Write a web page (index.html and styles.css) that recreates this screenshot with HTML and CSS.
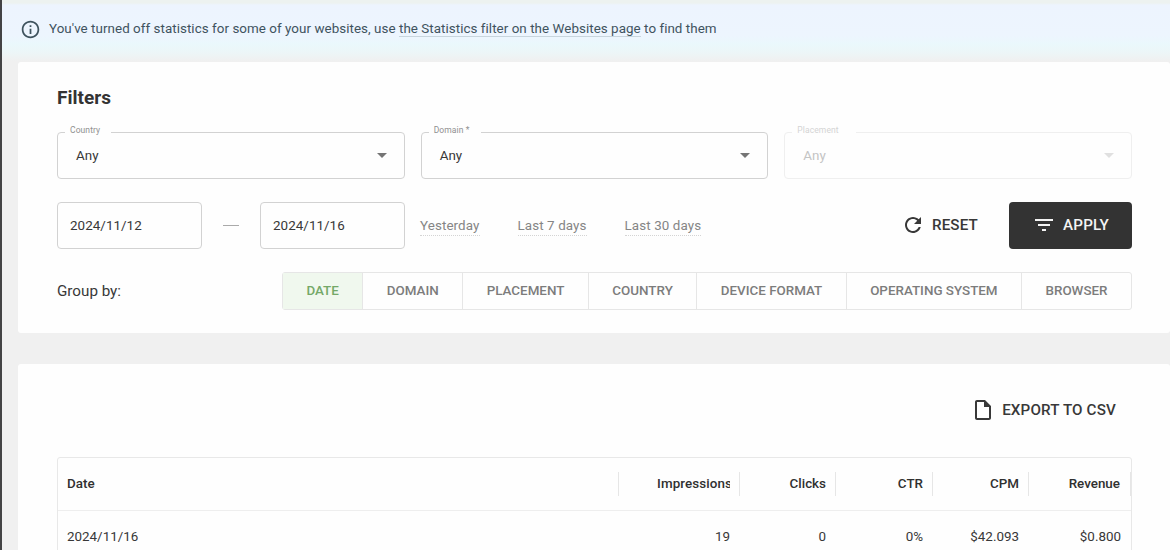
FILE: index.html
```
<!DOCTYPE html>
<html lang="en">
<head>
  <meta charset="UTF-8" />
  <title>Statistics</title>
  <link rel="stylesheet" href="styles.css">
</head>
<body>
  <div class="page">
    <!-- Notice -->
    <div class="notice">
      <svg class="notice-icon" viewBox="0 0 24 24"><path d="M11 7h2v2h-2zm0 4h2v6h-2zm1-9C6.48 2 2 6.48 2 12s4.48 10 10 10 10-4.48 10-10S17.52 2 12 2zm0 18c-4.41 0-8-3.59-8-8s3.59-8 8-8 8 3.59 8 8-3.59 8-8 8z"/></svg>
      <p class="notice-text">You've turned off statistics for some of your websites, use <a class="notice-link">the Statistics filter on the Websites page</a> to find them</p>
    </div>

    <!-- Filters -->
    <section class="card filters">
      <h2 class="title">Filters</h2>

      <div class="selects">
        <div class="select">
          <span class="label country">Country</span>
          <span>Any</span>
          <svg class="arrow" viewBox="0 0 10 5"><path d="M0 0h10L5 5z"/></svg>
        </div>
        <div class="select">
          <span class="label domain">Domain *</span>
          <span>Any</span>
          <svg class="arrow" viewBox="0 0 10 5"><path d="M0 0h10L5 5z"/></svg>
        </div>
        <div class="select disabled">
          <span class="label placement">Placement</span>
          <span>Any</span>
          <svg class="arrow" viewBox="0 0 10 5"><path d="M0 0h10L5 5z"/></svg>
        </div>
      </div>

      <div class="dates">
        <div class="date">2024/11/12</div>
        <span class="dash"></span>
        <div class="date">2024/11/16</div>
        <div class="presets">
          <a class="preset">Yesterday</a>
          <a class="preset">Last 7 days</a>
          <a class="preset">Last 30 days</a>
        </div>
        <div class="button reset">
          <svg class="reset-icon" viewBox="4 4 16 16"><path d="M17.65 6.35C16.2 4.9 14.21 4 12 4c-4.42 0-7.99 3.58-7.99 8s3.57 8 7.99 8c3.73 0 6.84-2.55 7.73-6h-2.08c-.82 2.33-3.04 4-5.65 4-3.31 0-6-2.69-6-6s2.69-6 6-6c1.66 0 3.14.69 4.22 1.78L13 11h7V4l-2.35 2.35z"/></svg>
          <span>RESET</span>
        </div>
        <div class="button apply">
          <svg class="apply-icon" viewBox="3 6 18 12"><path d="M10 18h4v-2h-4v2zM3 6v2h18V6H3zm3 7h12v-2H6v2z"/></svg>
          <span>APPLY</span>
        </div>
      </div>

      <div class="group">
        <span class="group-label">Group by:</span>
        <div class="tabs">
          <div class="tab active">DATE</div>
          <div class="tab">DOMAIN</div>
          <div class="tab">PLACEMENT</div>
          <div class="tab">COUNTRY</div>
          <div class="tab">DEVICE FORMAT</div>
          <div class="tab">OPERATING SYSTEM</div>
          <div class="tab">BROWSER</div>
        </div>
      </div>
    </section>

    <!-- Results -->
    <section class="card results">
      <div class="button export">
        <svg class="export-icon" viewBox="4 2 16 20"><path d="M14 2H6c-1.100 0-2 .9-2 2v16c0 1.100.9 2 2 2h12c1.100 0 2-.9 2-2V8l-6-6zM6 20V4h7v5h5v11H6z"/></svg>
        <span>EXPORT TO CSV</span>
      </div>

      <div class="table">
        <div class="row head">
          <div class="cell">Date</div>
          <div class="cell"><span class="clip">Impressions</span></div>
          <div class="cell">Clicks</div>
          <div class="cell">CTR</div>
          <div class="cell">CPM</div>
          <div class="cell">Revenue</div>
        </div>
        <div class="row">
          <div class="cell">2024/11/16</div>
          <div class="cell">19</div>
          <div class="cell">0</div>
          <div class="cell">0%</div>
          <div class="cell">$42.093</div>
          <div class="cell">$0.800</div>
        </div>
      </div>
    </section>
  </div>
</body>
</html>
```
FILE: styles.css
```
* {
  box-sizing: border-box;
}

body {
  margin: 0;
  height: 550px;
  overflow: hidden;
  background: #f0f0f0;
  color: #383838;
  font-family: Roboto, sans-serif;
  font-size: 13.4px;
}

.page {
  height: 550px;
  border-left: 2px solid #434345;
  overflow: hidden;
}

svg {
  fill: currentColor;
  flex: none;
}

/* blue notice on top */
.notice {
  display: flex;
  align-items: center;
  height: 62px;
  padding: 0 0 5px 20px;
  color: #3f535e;
  background: linear-gradient(#edf2f0 0, #edf2f0 3px, #edf4fe 5px, #edf5fe 36px, #eaf8fc 44px, #ecf6f8 52px, #f0f0f0 61px);
}

.notice-icon {
  width: 21px;
  height: 21px;
  margin: 1px 6px 0 -2px;
}

.notice-text {
  margin: 0;
  padding-left: 2px;
  line-height: 18px;
  letter-spacing: 0.045px;
  white-space: nowrap;
}

.notice-link {
  border-bottom: 1px solid #c8d5dd;
}

.card {
  margin-left: 16px;
  padding: 0 38px 0 39px;
  background: #fefefe;
  border-radius: 3px;
}

.filters {
  height: 271px;
  padding-top: 25px;
}

.title {
  margin: 0 0 24px;
  color: #333;
  font-size: 19px;
  font-weight: 700;
  line-height: 21px;
}

.selects {
  display: grid;
  grid-template-columns: repeat(3, 1fr);
  gap: 16px;
}

.select {
  position: relative;
  display: flex;
  align-items: center;
  justify-content: space-between;
  height: 47px;
  padding: 0 17px 0 18px;
  border: 1px solid #d2d2d2;
  border-radius: 4px;
}

/* label sits on the field border */
.label {
  position: absolute;
  top: -8px;
  left: 7px;
  padding-left: 5px;
  background: #fefefe;
  color: #909090;
  font-size: 8.5px;
  line-height: 10px;
  letter-spacing: 0.1px;
}

.label.country { width: 46px; }
.label.domain { width: 52px; }
.label.placement { width: 64px; }

.arrow {
  width: 10px;
  height: 5px;
  color: #757575;
}

.select.disabled {
  border-color: #efefef;
  color: #c4c4c4;
}

.select.disabled .label {
  color: #d4d4d4;
}

.select.disabled .arrow {
  color: #e0e0e0;
}

.dates {
  display: flex;
  align-items: center;
  margin-top: 23px;
}

.date {
  width: 145px;
  height: 47px;
  padding-left: 12px;
  border: 1px solid #d2d2d2;
  border-radius: 4px;
  line-height: 45px;
  letter-spacing: 0.05px;
}

.dash {
  width: 16px;
  height: 1px;
  margin: 0 21px 1px;
  background: #aaa;
}

.presets {
  display: flex;
  gap: 38px;
  margin-left: 15px;
}

.preset {
  border-bottom: 1px dotted #d4d4d4;
  color: #858585;
  line-height: 19px;
  letter-spacing: 0.1px;
}

.button {
  display: flex;
  align-items: center;
  font-size: 15.2px;
  font-weight: 500;
  letter-spacing: 0.15px;
}

.reset {
  gap: 11px;
  margin-left: auto;
  padding-bottom: 2px;
}

.reset-icon {
  width: 16px;
  height: 16px;
}

.apply {
  justify-content: center;
  gap: 10px;
  width: 123px;
  height: 47px;
  margin-left: 31px;
  padding: 0 0 2px 3px;
  border-radius: 4px;
  background: #333;
  color: #f4f4f4;
}

.apply-icon {
  width: 18px;
  height: 12px;
}

.group {
  display: flex;
  align-items: center;
  justify-content: space-between;
  margin-top: 23px;
}

.group-label {
  font-size: 15.2px;
}

.tabs {
  display: flex;
  width: 850px;
  height: 38px;
  border: 1px solid #e6e6e6;
  border-radius: 3px;
}

.tab {
  flex: auto;
  border-left: 1px solid #e6e6e6;
  color: #7c7c7c;
  font-weight: 500;
  line-height: 35px;
  text-align: center;
}

.tab.active {
  border-left: 0;
  background: #f0f8ee;
  color: #74a868;
}

.results {
  height: 300px;
  margin-top: 31px;
  padding-top: 36px;
}

.export {
  justify-content: flex-end;
  gap: 11px;
  height: 20px;
  padding-right: 16px;
}

.export-icon {
  width: 16px;
  height: 20px;
}

.table {
  margin-top: 37px;
  border: 1px solid #e8e8e8;
  border-radius: 3px;
}

.row {
  display: grid;
  grid-template-columns: 561px 121px 96px 97px 96px 1fr;
  height: 53px;
  align-items: center;
  border-bottom: 1px solid #eee;
}

.cell {
  height: 24px;
  padding-right: 10px;
  line-height: 24px;
  text-align: right;
}

.cell:first-child {
  padding-left: 9px;
  text-align: left;
}

.head {
  color: #303030;
  font-weight: 500;
}

.head .cell {
  padding-right: 9px;
  border-right: 1px solid #e6e6e6;
}

.row .cell:last-child {
  padding-right: 10px;
}

/* header text is cut off at the column edge */
.clip {
  display: inline-block;
  width: 73px;
  overflow: hidden;
  vertical-align: top;
  text-align: left;
  letter-spacing: 0.1px;
}
```
